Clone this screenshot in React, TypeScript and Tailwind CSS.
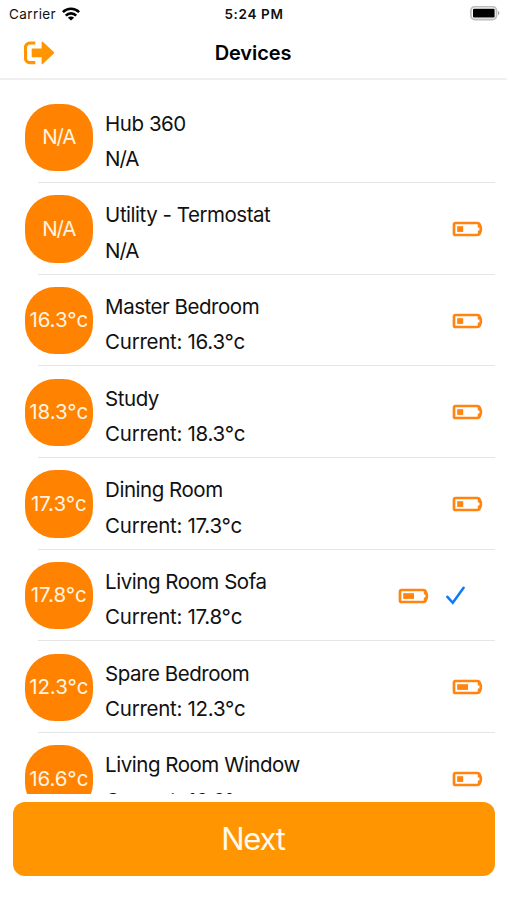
type Device = {
  name: string;
  temperature?: string;
  battery?: 'low' | 'half';
  selected?: boolean;
};

const devices: Device[] = [
  { name: 'Hub 360' },
  { name: 'Utility - Termostat', battery: 'low' },
  { name: 'Master Bedroom', temperature: '16.3°c', battery: 'low' },
  { name: 'Study', temperature: '18.3°c', battery: 'low' },
  { name: 'Dining Room', temperature: '17.3°c', battery: 'low' },
  { name: 'Living Room Sofa', temperature: '17.8°c', battery: 'half', selected: true },
  { name: 'Spare Bedroom', temperature: '12.3°c', battery: 'half' },
  { name: 'Living Room Window', temperature: '16.6°c', battery: 'low' },
];

function StatusBar() {
  return (
    <div className="grid h-7 grid-cols-3 items-center pl-[9px] pr-[7px] text-[13.5px] leading-none">
      <div className="flex items-center gap-[6px]">
        <span className="pt-px tracking-[0.4px]">Carrier</span>
        <svg className="h-[14px] w-[18px]" viewBox="0 0 18 14" fill="none" stroke="#000" strokeWidth="2.6">
          <path d="M0.9 5.1a11.6 11.6 0 0 1 16.2 0" />
          <path d="M3.8 8.6a7.3 7.3 0 0 1 10.4 0" />
          <path d="M9 13.6 5.9 10.8a4.4 4.4 0 0 1 6.2 0z" fill="#000" stroke="none" />
        </svg>
      </div>
      <span className="-ml-px pt-px text-center font-semibold tracking-[0.65px]">5:24 PM</span>
      <svg className="h-4 w-[31px] justify-self-end" viewBox="0 0 31 16">
        <rect x="1.9" y="0.7" width="25.6" height="12.8" rx="4" fill="#fff" stroke="#bdbdbd" strokeWidth="1.8" />
        <rect x="4" y="2.8" width="21.6" height="8.8" rx="1" fill="#000" />
        <path d="M29 5c1.9.6 1.9 3.6 0 4.2z" fill="#a8a8a8" />
      </svg>
    </div>
  );
}

function LogoutIcon() {
  return (
    <svg className="h-6 w-[31px]" viewBox="0 0 31 24" fill="none">
      <path d="M11.3 2H5.8a4.3 4.3 0 0 0-4.3 4.3v11a4.3 4.3 0 0 0 4.3 4.3h5.5" stroke="#ff9500" strokeWidth="3.2" />
      <path
        d="M8.6 7.4h9V1.4q0-1.5 1.2-.6l11 10.2q.8.8 0 1.6l-11 10.3q-1.2 1-1.2-.6v-6h-9q-.9 0-.9-.9V8.3q0-.9.9-.9z"
        fill="#ff9500"
      />
    </svg>
  );
}

function BatteryIcon({ level }: { level: 'low' | 'half' }) {
  return (
    <svg className="h-4 w-[31px]" viewBox="0 0 31 16" fill="none">
      <path
        d="M3.6 2h21.8q1.6 0 2.1 1.3l1 2.4q.3.6.3 1.4v2q0 .8-.3 1.4l-1 2.2q-.5 1.3-2.1 1.3H3.6Q2 14 2 12.4V3.6Q2 2 3.6 2z"
        stroke="#ff8410"
        strokeWidth="2.7"
      />
      <path d="M25.8 2h2.4v4.6h-2.4zM25.8 9.6h2.4V14h-2.4z" fill="#ff8410" />
      <rect x="5.2" y="5.2" width={level === 'half' ? 10.8 : 6} height="5.7" fill="#ff8410" />
    </svg>
  );
}

function DeviceRow({ device }: { device: Device }) {
  const { name, temperature, battery, selected } = device;

  return (
    <li className="flex h-[91.67px] shrink-0 flex-col pl-[25px] pr-3">
      <div className="flex min-h-0 flex-1 items-center pt-[1.4px]">
        <div className="flex size-[67.5px] shrink-0 items-center justify-center rounded-[30px] bg-[#ff8200] text-[20.5px] text-[#fff4e2]">
          {temperature ? (
            <span className="tracking-[-0.08px]">{temperature}</span>
          ) : (
            <span className="tracking-[-1.2px]">N/A</span>
          )}
        </div>
        <div className="ml-[12.6px] flex-1 pt-[7.6px] text-[20.5px] leading-[35.5px]">
          <p className="tracking-[-0.47px]">{name}</p>
          {temperature ? (
            <p className="tracking-[-0.28px]">Current: {temperature}</p>
          ) : (
            <p className="tracking-[-1.1px]">N/A</p>
          )}
        </div>
        {battery && <BatteryIcon level={battery} />}
        {selected && (
          <svg className="ml-[17px] mr-[18px] h-5 w-[19px]" viewBox="0 0 19 20" fill="none">
            <path d="m1.4 10.8 5.4 6L17.6 1.8" stroke="#0a7aff" strokeWidth="2.5" strokeLinecap="round" />
          </svg>
        )}
        <span className="w-3" />
      </div>
      <div className="ml-[13px] h-px bg-[#e5e5e6]" />
    </li>
  );
}

export default function App() {
  return (
    <div className="flex h-[900px] w-[507px] flex-col overflow-hidden bg-white font-['Inter',sans-serif] text-[#111]">
      <StatusBar />
      <header className="grid h-[52px] shrink-0 grid-cols-3 items-center border-b-2 border-[#f0f0f0] px-6">
        <button className="w-fit" aria-label="Log out">
          <LogoutIcon />
        </button>
        <h1 className="-ml-px text-center text-[20px] font-semibold tracking-[-0.1px] text-black">Devices</h1>
      </header>
      <ul className="flex h-[714px] shrink-0 flex-col overflow-hidden pt-[11.3px]">
        {devices.map((device) => (
          <DeviceRow key={device.name} device={device} />
        ))}
      </ul>
      <button className="ml-[13px] mr-3 mt-2 h-[74px] shrink-0 rounded-xl bg-[#ff9500] pr-[2px] text-[31px] tracking-[-1.2px] text-[#fffaf0]">
        Next
      </button>
    </div>
  );
}
